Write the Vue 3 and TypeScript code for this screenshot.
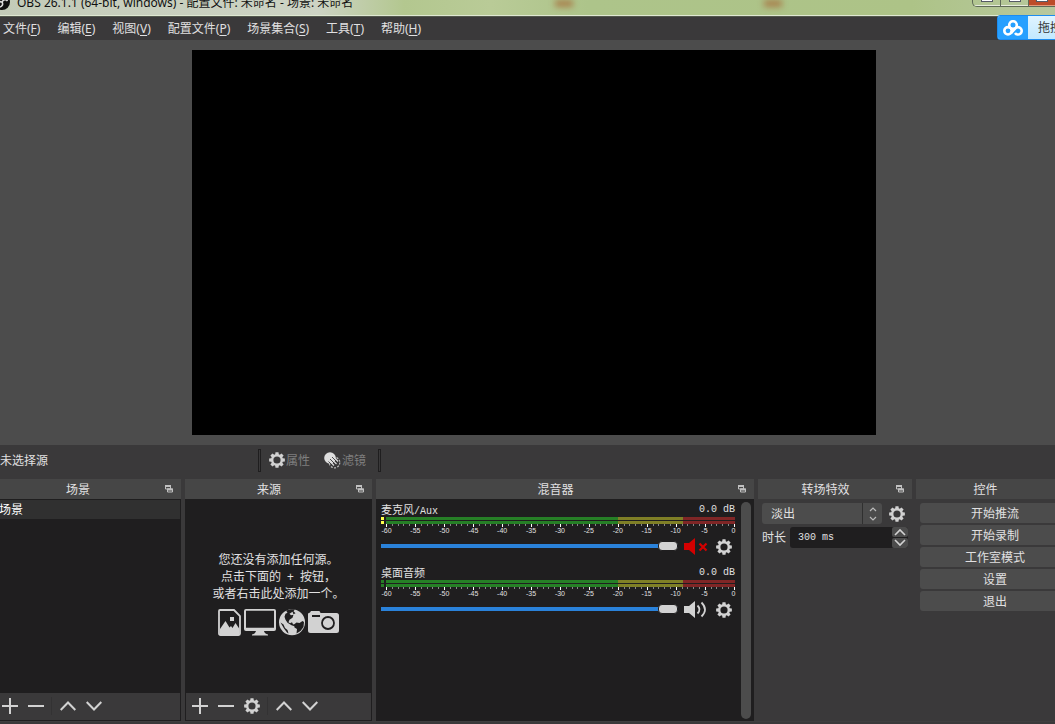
<script setup lang="ts">
import { ref } from 'vue'

interface MenuEntry { label: string; key: string }
interface Channel { id: string; zh: string; en: string; muted: boolean; volume: number }

const menus: MenuEntry[] = [
  { label: '文件', key: 'F' },
  { label: '编辑', key: 'E' },
  { label: '视图', key: 'V' },
  { label: '配置文件', key: 'P' },
  { label: '场景集合', key: 'S' },
  { label: '工具', key: 'T' },
  { label: '帮助', key: 'H' },
]

const channels = ref<Channel[]>([
  { id: 'mic', zh: '麦克风', en: '/Aux', muted: true, volume: 100 },
  { id: 'desktop', zh: '桌面音频', en: '', muted: false, volume: 100 },
])

const actions: string[] = ['开始推流', '开始录制', '工作室模式', '设置', '退出']
const scaleLabels: number[] = Array.from({ length: 13 }, (_, i) => -60 + i * 5)
const transition = ref('淡出')
const duration = ref('300 ms')

function stepDuration(delta: number): void {
  duration.value = `${Math.max(50, parseInt(duration.value, 10) + delta)} ms`
}

// Eight-toothed cog inside a 16x16 box, with a round hole.
function cog(): string {
  const points: string[] = []
  const outline: [number, number][] = [[-0.3, 6], [-0.19, 8], [0.19, 8], [0.3, 6]]
  for (let i = 0; i < 8; i++) {
    for (const [offset, radius] of outline) {
      const a = (i * Math.PI) / 4 + offset
      points.push(`${(8 + radius * Math.sin(a)).toFixed(2)} ${(8 - radius * Math.cos(a)).toFixed(2)}`)
    }
  }
  return `M${points.join('L')}ZM8 4.4a3.6 3.6 0 1 0 0 7.2a3.6 3.6 0 1 0 0-7.2Z`
}
const cogPath = cog()
</script>

<template>
  <div class="screen">
    <div class="window">
      <header class="titlebar">
        <svg class="app-icon" width="16" height="16" viewBox="0 0 16 16" aria-hidden="true">
          <circle cx="8" cy="8" r="8" fill="#111" />
          <g fill="none" stroke="#ddd" stroke-width="1.6">
            <path d="M8 8C5 8 3.500 6 4.500 3.500" /><path d="M8 8c1.500-2.600 4-3 5.500-1" /><path d="M8 8c1.500 2.600 0 5-2.500 5" />
          </g>
        </svg>
        <span class="title">OBS 26.1.1 (64-bit, windows) - 配置文件: 未命名 - 场景: 未命名</span>
        <div class="reflections"><i></i><i></i></div>
        <div class="caption">
          <button type="button" aria-label="最小化"><i></i></button>
          <button type="button" aria-label="最大化"><i></i></button>
          <button type="button" class="close" aria-label="关闭"><i></i></button>
        </div>
      </header>

      <nav class="menubar">
        <button v-for="m in menus" :key="m.key" type="button">{{ m.label }}(<u>{{ m.key }}</u>)</button>
      </nav>

      <main class="preview"><div class="canvas"></div></main>

      <section class="context">
        <span class="none">未选择源</span>
        <i class="bar"></i>
        <button type="button" disabled>
          <svg width="16" height="16" viewBox="0 0 16 16"><path :d="cogPath" fill="#d2d2d2" fill-rule="evenodd" /></svg><span>属性</span>
        </button>
        <button type="button" disabled class="filter">
          <svg width="17" height="17" viewBox="0 0 17 17">
            <circle cx="10.500" cy="10.500" r="5.300" fill="none" stroke="#bbb" stroke-width="1.200" stroke-dasharray="2 1.300" />
            <circle cx="6" cy="6" r="5.800" fill="#dedede" />
            <path d="M9.500 5l4.500 4.500M7 6.500l5.500 5.500M5 8.500l5 5" stroke="#dedede" stroke-width="1.200" />
            <path d="M8 5l5 5M6 7l5.500 5.500M4.500 9.500l3.500 3.500" stroke="#3a393a" stroke-width=".9" />
          </svg><span>滤镜</span>
        </button>
        <i class="bar"></i>
      </section>

      <div class="docks">
        <section class="dock">
          <h2><span>场景</span>
            <button type="button" aria-label="浮动"><svg width="8" height="8" viewBox="0 0 8 8"><path d="M.5 1h5v3h-5z M2.500 4h5v3h-5z" /><path d="M0 1h6M2 4.500h6" stroke-width="2" /></svg></button>
          </h2>
          <div class="panel">
            <ul class="scenes"><li>场景</li></ul>
            <div class="tools">
              <button type="button" aria-label="添加"><svg width="16" height="16" viewBox="0 0 16 16"><path d="M0 8h16M8 0v16" /></svg></button>
              <button type="button" aria-label="移除"><svg width="16" height="16" viewBox="0 0 16 16"><path d="M0 8h16" /></svg></button>
              <i></i>
              <button type="button" aria-label="上移"><svg width="16" height="16" viewBox="0 0 16 16"><path d="M.7 12L8 4.500l7.300 7.500" /></svg></button>
              <button type="button" aria-label="下移"><svg width="16" height="16" viewBox="0 0 16 16"><path d="M.7 4L8 11.500L15.300 4" /></svg></button>
            </div>
          </div>
        </section>

        <section class="dock">
          <h2><span>来源</span>
            <button type="button" aria-label="浮动"><svg width="8" height="8" viewBox="0 0 8 8"><path d="M.5 1h5v3h-5z M2.500 4h5v3h-5z" /><path d="M0 1h6M2 4.500h6" stroke-width="2" /></svg></button>
          </h2>
          <div class="panel">
            <div class="empty">
              <p>您还没有添加任何源。<br>点击下面的<b>+</b>按钮，<br>或者右击此处添加一个。</p>
              <div class="kinds">
                <svg width="23" height="27" viewBox="0 0 23 27">
                  <path d="M2 1h14l6 6v17.500a1.500 1.500 0 0 1-1.500 1.500h-18A1.500 1.500 0 0 1 1 24.500V2a1 1 0 0 1 1-1z" fill="none" stroke="#d2d2d2" stroke-width="1.800" />
                  <path d="M2 20l5.500-8l4 6.500l1.500-1.500l1.500 2l3-5l4 6v6H2z" fill="#d2d2d2" /><path d="M12 8h4v4h-4z" fill="#d2d2d2" />
                </svg>
                <svg width="32" height="27" viewBox="0 0 32 27">
                  <path fill-rule="evenodd" d="M2 0h28a2 2 0 0 1 2 2v18a2 2 0 0 1-2 2H20q.5 2.500 4 3.500v1H8v-1q3.500-1 4-3.500H2a2 2 0 0 1-2-2V2a2 2 0 0 1 2-2zM2 1.800v17h28v-17z" fill="#d2d2d2" />
                </svg>
                <svg width="26" height="27" viewBox="0 0 26 27">
                  <circle cx="13" cy="13.300" r="13" fill="#d2d2d2" />
                  <path d="M7 1.500L12 .3l4 0l-1.500 2l2 2l-2 1l-1-2.500l-3 2l1.500 1.500l2.500-.5l-1 3l-3 2l-1 2.500l1.500 1l2-1l1 2l2.500 .5l-1 1.500l-3-1l-4-2.500l-2-3l-1-3l1-3l2-1z" fill="#1f1e1f" />
                  <path d="M15 15.500l2.500-2l3 .5l3-2l1.500 1l-.5 5l-3 4l-4 2.500l.5-4.500l-2.500-1.500z" fill="#1f1e1f" />
                  <path d="M1.500 13.500l3 2l1.500 3.500l2.500 2l1 3.500l-1.500-1l-3-4z" fill="#1f1e1f" />
                </svg>
                <svg width="31" height="27" viewBox="0 0 31 27">
                  <path d="M3 2h8q1 0 1.500 2H28.500a2.500 2.500 0 0 1 2.500 2.500v15a2.500 2.500 0 0 1-2.500 2.500h-26A2.500 2.500 0 0 1 0 21.500V5q0-1 1-1q1 0 2-2z" fill="#d2d2d2" />
                  <path d="M4 7h8" stroke="#1f1e1f" stroke-width="2" /><circle cx="20" cy="14" r="6" fill="none" stroke="#1f1e1f" stroke-width="1.800" />
                </svg>
              </div>
            </div>
            <div class="tools">
              <button type="button" aria-label="添加"><svg width="16" height="16" viewBox="0 0 16 16"><path d="M0 8h16M8 0v16" /></svg></button>
              <button type="button" aria-label="移除"><svg width="16" height="16" viewBox="0 0 16 16"><path d="M0 8h16" /></svg></button>
              <button type="button" aria-label="属性"><svg width="16" height="16" viewBox="0 0 16 16"><path class="solid" :d="cogPath" fill-rule="evenodd" /></svg></button>
              <i></i>
              <button type="button" aria-label="上移"><svg width="16" height="16" viewBox="0 0 16 16"><path d="M.7 12L8 4.500l7.300 7.500" /></svg></button>
              <button type="button" aria-label="下移"><svg width="16" height="16" viewBox="0 0 16 16"><path d="M.7 4L8 11.500L15.300 4" /></svg></button>
            </div>
          </div>
        </section>

        <section class="dock">
          <h2><span>混音器</span>
            <button type="button" aria-label="浮动"><svg width="8" height="8" viewBox="0 0 8 8"><path d="M.5 1h5v3h-5z M2.500 4h5v3h-5z" /><path d="M0 1h6M2 4.500h6" stroke-width="2" /></svg></button>
          </h2>
          <div class="panel mixer">
            <div class="channels">
              <div v-for="c in channels" :key="c.id" class="channel">
                <div class="name"><label :for="c.id">{{ c.zh }}<span class="mono">{{ c.en }}</span></label><span class="mono">0.0 dB</span></div>
                <div class="meter" :class="{ lit: c.muted }">
                  <div class="peak"><i></i><i></i></div>
                  <div class="scale">
                    <i class="level"></i><i class="level"></i>
                    <div class="ticks"><i v-for="n in 61" :key="n" :class="{ major: n % 5 === 1 }"></i></div>
                    <div class="numbers"><span v-for="n in scaleLabels" :key="n">{{ n }}</span></div>
                  </div>
                </div>
                <div class="fader">
                  <input :id="c.id" v-model.number="c.volume" type="range" min="0" max="100">
                  <button type="button" :aria-label="c.muted ? '取消静音' : '静音'" @click="c.muted = !c.muted">
                    <svg width="24" height="18" viewBox="0 0 24 18">
                      <template v-if="c.muted">
                        <path d="M0 5h5l6-5v17l-6-5H0z" fill="#d40000" /><path d="M15.500 5.500l7 7m0-7l-7 7" stroke="#d40000" stroke-width="2.200" />
                      </template>
                      <template v-else>
                        <path d="M0 5h5l6-5v17l-6-5H0z" fill="#d2d2d2" /><path d="M13.500 4.500q4 4 0 8M17.500 1.500q7 7 0 14" fill="none" stroke="#d2d2d2" stroke-width="1.800" />
                      </template>
                    </svg>
                  </button>
                  <button type="button" aria-label="音频设置"><svg width="16" height="16" viewBox="0 0 16 16"><path :d="cogPath" fill="#d2d2d2" fill-rule="evenodd" /></svg></button>
                </div>
              </div>
            </div>
            <div class="scrollbar"></div>
          </div>
        </section>

        <section class="dock">
          <h2><span>转场特效</span>
            <button type="button" aria-label="浮动"><svg width="8" height="8" viewBox="0 0 8 8"><path d="M.5 1h5v3h-5z M2.500 4h5v3h-5z" /><path d="M0 1h6M2 4.500h6" stroke-width="2" /></svg></button>
          </h2>
          <div class="transitions">
            <div class="line">
              <div class="combo">
                <select v-model="transition" aria-label="转场特效"><option>淡出</option><option>剪切</option></select>
                <span><svg width="8" height="14" viewBox="0 0 8 14"><path d="M1 4l3-3l3 3M1 10l3 3l3-3" fill="none" stroke="#bbb" stroke-width="1.200" /></svg></span>
              </div>
              <button type="button" class="gear" aria-label="转场设置"><svg width="16" height="16" viewBox="0 0 16 16"><path :d="cogPath" fill="#d2d2d2" fill-rule="evenodd" /></svg></button>
            </div>
            <div class="line second">
              <label for="duration">时长</label>
              <div class="spin">
                <input id="duration" v-model="duration" type="text">
                <div>
                  <button type="button" aria-label="增加" @click="stepDuration(50)"><svg width="12" height="8" viewBox="0 0 12 8"><path d="M1 7l5-5l5 5" /></svg></button>
                  <button type="button" aria-label="减少" @click="stepDuration(-50)"><svg width="12" height="8" viewBox="0 0 12 8"><path d="M1 1l5 5l5-5" /></svg></button>
                </div>
              </div>
            </div>
          </div>
        </section>

        <section class="dock">
          <h2><span>控件</span><button type="button" aria-label="浮动"></button></h2>
          <div class="actions"><button v-for="a in actions" :key="a" type="button">{{ a }}</button></div>
        </section>
      </div>
      <footer class="status"></footer>
    </div>

    <aside class="upload">
      <span class="logo">
        <svg width="20" height="16" viewBox="0 0 20 16" fill="none" stroke="#fff" stroke-width="2.600">
          <circle cx="10" cy="5" r="3.800" /><circle cx="5" cy="10.800" r="3.700" />
          <path d="M8 13.200L12.300 8.300A3.700 3.700 0 1 1 12 13" />
        </svg>
      </span>
      <span class="drag">拖拽</span>
    </aside>
  </div>
</template>

<style>
html, body { margin: 0; background: #3a393a; }
</style>

<style scoped>
* { box-sizing: border-box; }
.screen {
  position: relative; overflow: hidden; height: 100vh;
  font: 12px/16px "Noto Sans", "Noto Sans CJK SC", sans-serif; color: #e1e0e1;
}
/* The window hangs slightly over both sides of the screen. */
.window { display: flex; flex-direction: column; height: 100%; margin: 0 -19px 0 -6px; background: #3a393a; }
button, input, select { font: inherit; color: inherit; border: 0; margin: 0; padding: 0; background: none; }
svg { display: block; flex: none; }

.titlebar {
  display: flex; align-items: flex-start; height: 17px; padding-right: 19px; overflow: hidden;
  border-bottom: 1px solid #53584d; box-shadow: inset 0 -1px #dfe8d2; color: #111;
  background: linear-gradient(90deg, #c3cbb8, #cdd3c4 30%, #b3c78f 38%, #b9cb97 46%, #adc48a 55%, #adc387 85%, #b9c9a1);
}
.app-icon { margin: -6px 7px 0 0; }
.title { margin-top: -5px; word-break: keep-all; white-space: nowrap; }
.reflections { flex: 1; display: flex; gap: 191px; padding-left: 202px; filter: blur(3px); }
.reflections i { width: 18px; height: 7px; background: #a87f4b; }
.caption { display: flex; width: 83px; height: 7px; border: 1px solid #5f6a58; border-width: 0 0 1px 1px; border-radius: 0 0 0 5px; overflow: hidden; }
.caption button { display: flex; justify-content: center; width: 28px; height: 6px; border-right: 1px solid #5f6a58; box-shadow: inset 0 -1px #e5ebdc; }
.caption i { width: 12px; height: 2px; background: #fff; border: 1px solid #555a66; border-top: 0; }
.caption .close { flex: 1; background: #bd4b29; border: 0; box-shadow: inset 0 -1px #e39a7c; }

.menubar { display: flex; gap: 17px; height: 23px; padding: 1px 9px 0; }
.menubar button { white-space: nowrap; }
.menubar u { text-underline-offset: 2px; }

.preview { flex: 1; min-height: 0; display: flex; justify-content: center; padding: 10px; background: #4c4c4c; }
.canvas { height: 100%; aspect-ratio: 16 / 9; background: #000; }

.context { display: flex; align-items: center; height: 34px; padding: 0 6px 4px; }
.context span { padding-top: 2px; }
.context .none { width: 258px; }
.bar { width: 3px; height: 23px; border: 1px solid #1f1e1f; }
.context button { display: flex; align-items: center; gap: 1px; margin-left: 8px; color: #7f7f7f; white-space: nowrap; }
.context .filter { margin: 0 12px 0 14px; }

.docks { display: grid; grid-template-columns: 187fr 187fr 378fr 154fr 158fr; gap: 4px; height: 242px; }
.dock { display: flex; flex-direction: column; min-width: 0; }
h2 { display: flex; align-items: center; height: 20px; margin: 0; padding-right: 8px; background: #464646; font: inherit; text-align: center; }
h2 span { flex: 1; padding-top: 2px; }
h2 button { width: 8px; margin-left: 3px; }
h2 svg { fill: none; stroke: #c0c0c0; }
.panel { flex: 1; display: flex; flex-direction: column; background: #1f1e1f; padding: 1px; min-height: 0; }
.scenes { flex: 1; list-style: none; margin: 0; padding: 0; }
.scenes li { height: 19px; line-height: 19px; padding-left: 4px; background: #303030; color: #fff; }
.tools { display: flex; align-items: center; gap: 10px; height: 27px; padding: 0 0 1px 6px; background: #3a393a; }
.scenes + .tools { padding-left: 7px; }
.tools svg { fill: none; stroke: #d2d2d2; stroke-width: 2; }
.tools .solid { fill: #d2d2d2; stroke: none; }
.tools i { width: 1px; height: 18px; margin: 0 -2px 0 -3px; background: #333233; }
.empty { flex: 1; display: flex; flex-direction: column; align-items: center; padding-top: 51px; }
.empty p { margin: 0 0 7px; line-height: 17px; text-align: center; white-space: nowrap; }
.empty b { font-weight: 400; padding: 0 6px; }
.kinds { display: flex; gap: 3px; }

.mixer { flex-direction: row; padding: 3px 3px 2px 5px; gap: 6px; }
.channels { flex: 1; min-width: 0; }
.scrollbar { width: 10px; border-radius: 5px; background: #4c4c4c; }
.channel { height: 63px; }
.name { display: flex; justify-content: space-between; height: 15px; font-size: 11px; line-height: 15px; }
.mono { font-family: "Liberation Mono", monospace; font-size: 10px; }
.meter { display: flex; gap: 2px; height: 21px; }
.peak { width: 3px; }
.peak i, .level { display: block; height: 3px; margin-bottom: 1px; background: #267f26; }
.lit .peak i { background: #ffff4c; }
.scale { flex: 1; }
.level { background: linear-gradient(90deg, #267f26 66.600%, #7f7f26 66.600% 85%, #7f2626 85%); }
.ticks { display: flex; justify-content: space-between; height: 3px; margin-top: -1px; }
.ticks i { width: 1px; height: 2px; background: #888; }
.ticks .major { height: 3px; background: #fff; }
.numbers { display: flex; justify-content: space-between; padding-right: 1px; font: 7px/8px "Liberation Sans", sans-serif; }
.numbers span { display: flex; justify-content: center; width: 1px; white-space: nowrap; }
.fader { display: flex; align-items: center; justify-content: space-between; height: 18px; }
.fader input { appearance: none; flex: 1; height: 10px; margin: 0 6px 2px 0; min-width: 0; background: linear-gradient(#2a82da, #2a82da) center / 100% 4px no-repeat; }
.fader input::-webkit-slider-thumb { appearance: none; width: 20px; height: 10px; border: 1px solid #1f1e1f; border-radius: 4px; background: #d2d2d2; }
.fader button + button { margin: 0 3px 0 8px; }

.transitions { padding: 4px; }
.line { display: flex; align-items: center; }
.combo { flex: 1; display: grid; grid-template-columns: 1fr 20px; height: 21px; min-width: 0; background: #4c4c4c; border-radius: 3px; }
.combo select { appearance: none; grid-area: 1 / 1 / 2 / 3; padding: 1px 9px 0; width: 100%; }
.combo option { background: #3a393a; }
.combo span { grid-area: 1 / 2; display: grid; place-items: center; border-left: 1px solid #303030; pointer-events: none; }
.gear { margin: 0 3px 0 7px; }
.second { gap: 4px; margin-top: 3px; }
.spin { flex: 1; display: flex; height: 21px; min-width: 0; background: #1f1e1f; border-radius: 3px; overflow: hidden; }
.spin input { flex: 1; min-width: 0; padding: 0 8px; font: 10px/20px "Liberation Mono", monospace; }
.spin div { display: grid; gap: 1px; width: 16px; }
.spin button { display: grid; place-items: center; background: #4c4c4c; border-radius: 2px; }
.spin svg { fill: none; stroke: #d2d2d2; stroke-width: 1.600; }

.actions { display: grid; gap: 2px; padding: 4px; }
.actions button { height: 20px; padding-top: 2px; border-radius: 3px; background: #4c4c4c; line-height: 18px; }
.status { height: 3px; border-top: 1px solid #3f3e3f; }

.upload {
  position: absolute; top: 15px; right: -30px; display: flex; height: 25px; width: 88px;
  border: 1px solid #1c8cf0; border-radius: 3px; background: linear-gradient(#e0f4ff, #c2e9ff); overflow: hidden; color: #333;
}
.logo { display: grid; place-items: center; width: 30px; background: #26a0ff; }
.drag { padding-left: 10px; line-height: 24px; white-space: nowrap; }
</style>
